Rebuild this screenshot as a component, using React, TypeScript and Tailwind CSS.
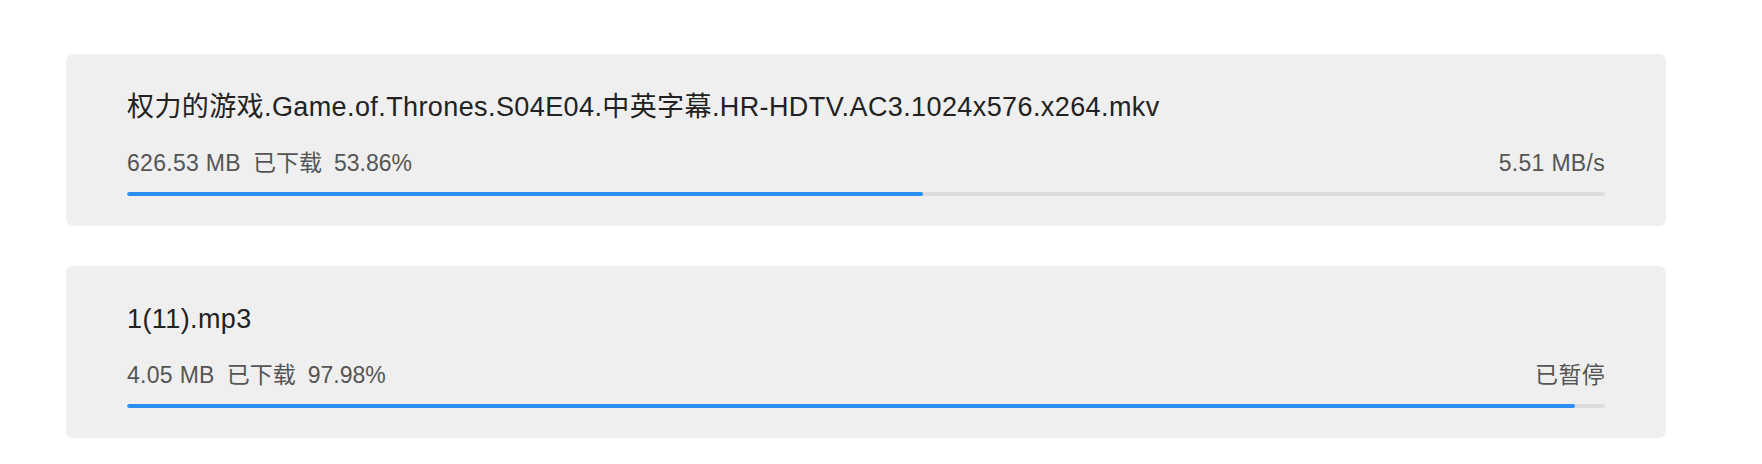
type Task = {
    name: string;
    size: string;
    percent: number;
    status: string;
};

const tasks: Task[] = [
    {
        name: '权力的游戏.Game.of.Thrones.S04E04.中英字幕.HR-HDTV.AC3.1024x576.x264.mkv',
        size: '626.53 MB',
        percent: 53.86,
        status: '5.51 MB/s',
    },
    {
        name: '1(11).mp3',
        size: '4.05 MB',
        percent: 97.98,
        status: '已暂停',
    },
];

function TaskCard({ task }: { task: Task }) {
    return (
        <div className="w-[1600px] rounded-[7px] bg-[#efefef] px-[61px] pt-[34px] pb-[30px]">
            <div className="text-[27px] leading-[39px] tracking-[0.4px] text-[#222] whitespace-nowrap">{task.name}</div>
            <div className="mt-[20px] flex items-center justify-between text-[23px] leading-[33px] text-[#555]">
                <div className="flex items-center gap-[12px]">
                    <span className="tracking-[0.3px]">{task.size}</span>
                    <span>已下载</span>
                    <span>{task.percent.toFixed(2)}%</span>
                </div>
                <span className="tracking-[0.3px]">{task.status}</span>
            </div>
            <div className="mt-[12px] h-[4px] w-full overflow-hidden rounded-full bg-[#dcdcdc]">
                <div className="h-full rounded-full bg-[#2b8ef0]" style={{ width: `${task.percent}%` }} />
            </div>
        </div>
    );
}

export default function App() {
    return (
        <div
            className="min-h-[464px] bg-white pl-[66px] pt-[54px] flex flex-col gap-[40px]"
            style={{ fontFamily: '"Liberation Sans", "Noto Sans CJK SC", sans-serif' }}
        >
            {tasks.map((t) => (
                <TaskCard key={t.name} task={t} />
            ))}
        </div>
    );
}
